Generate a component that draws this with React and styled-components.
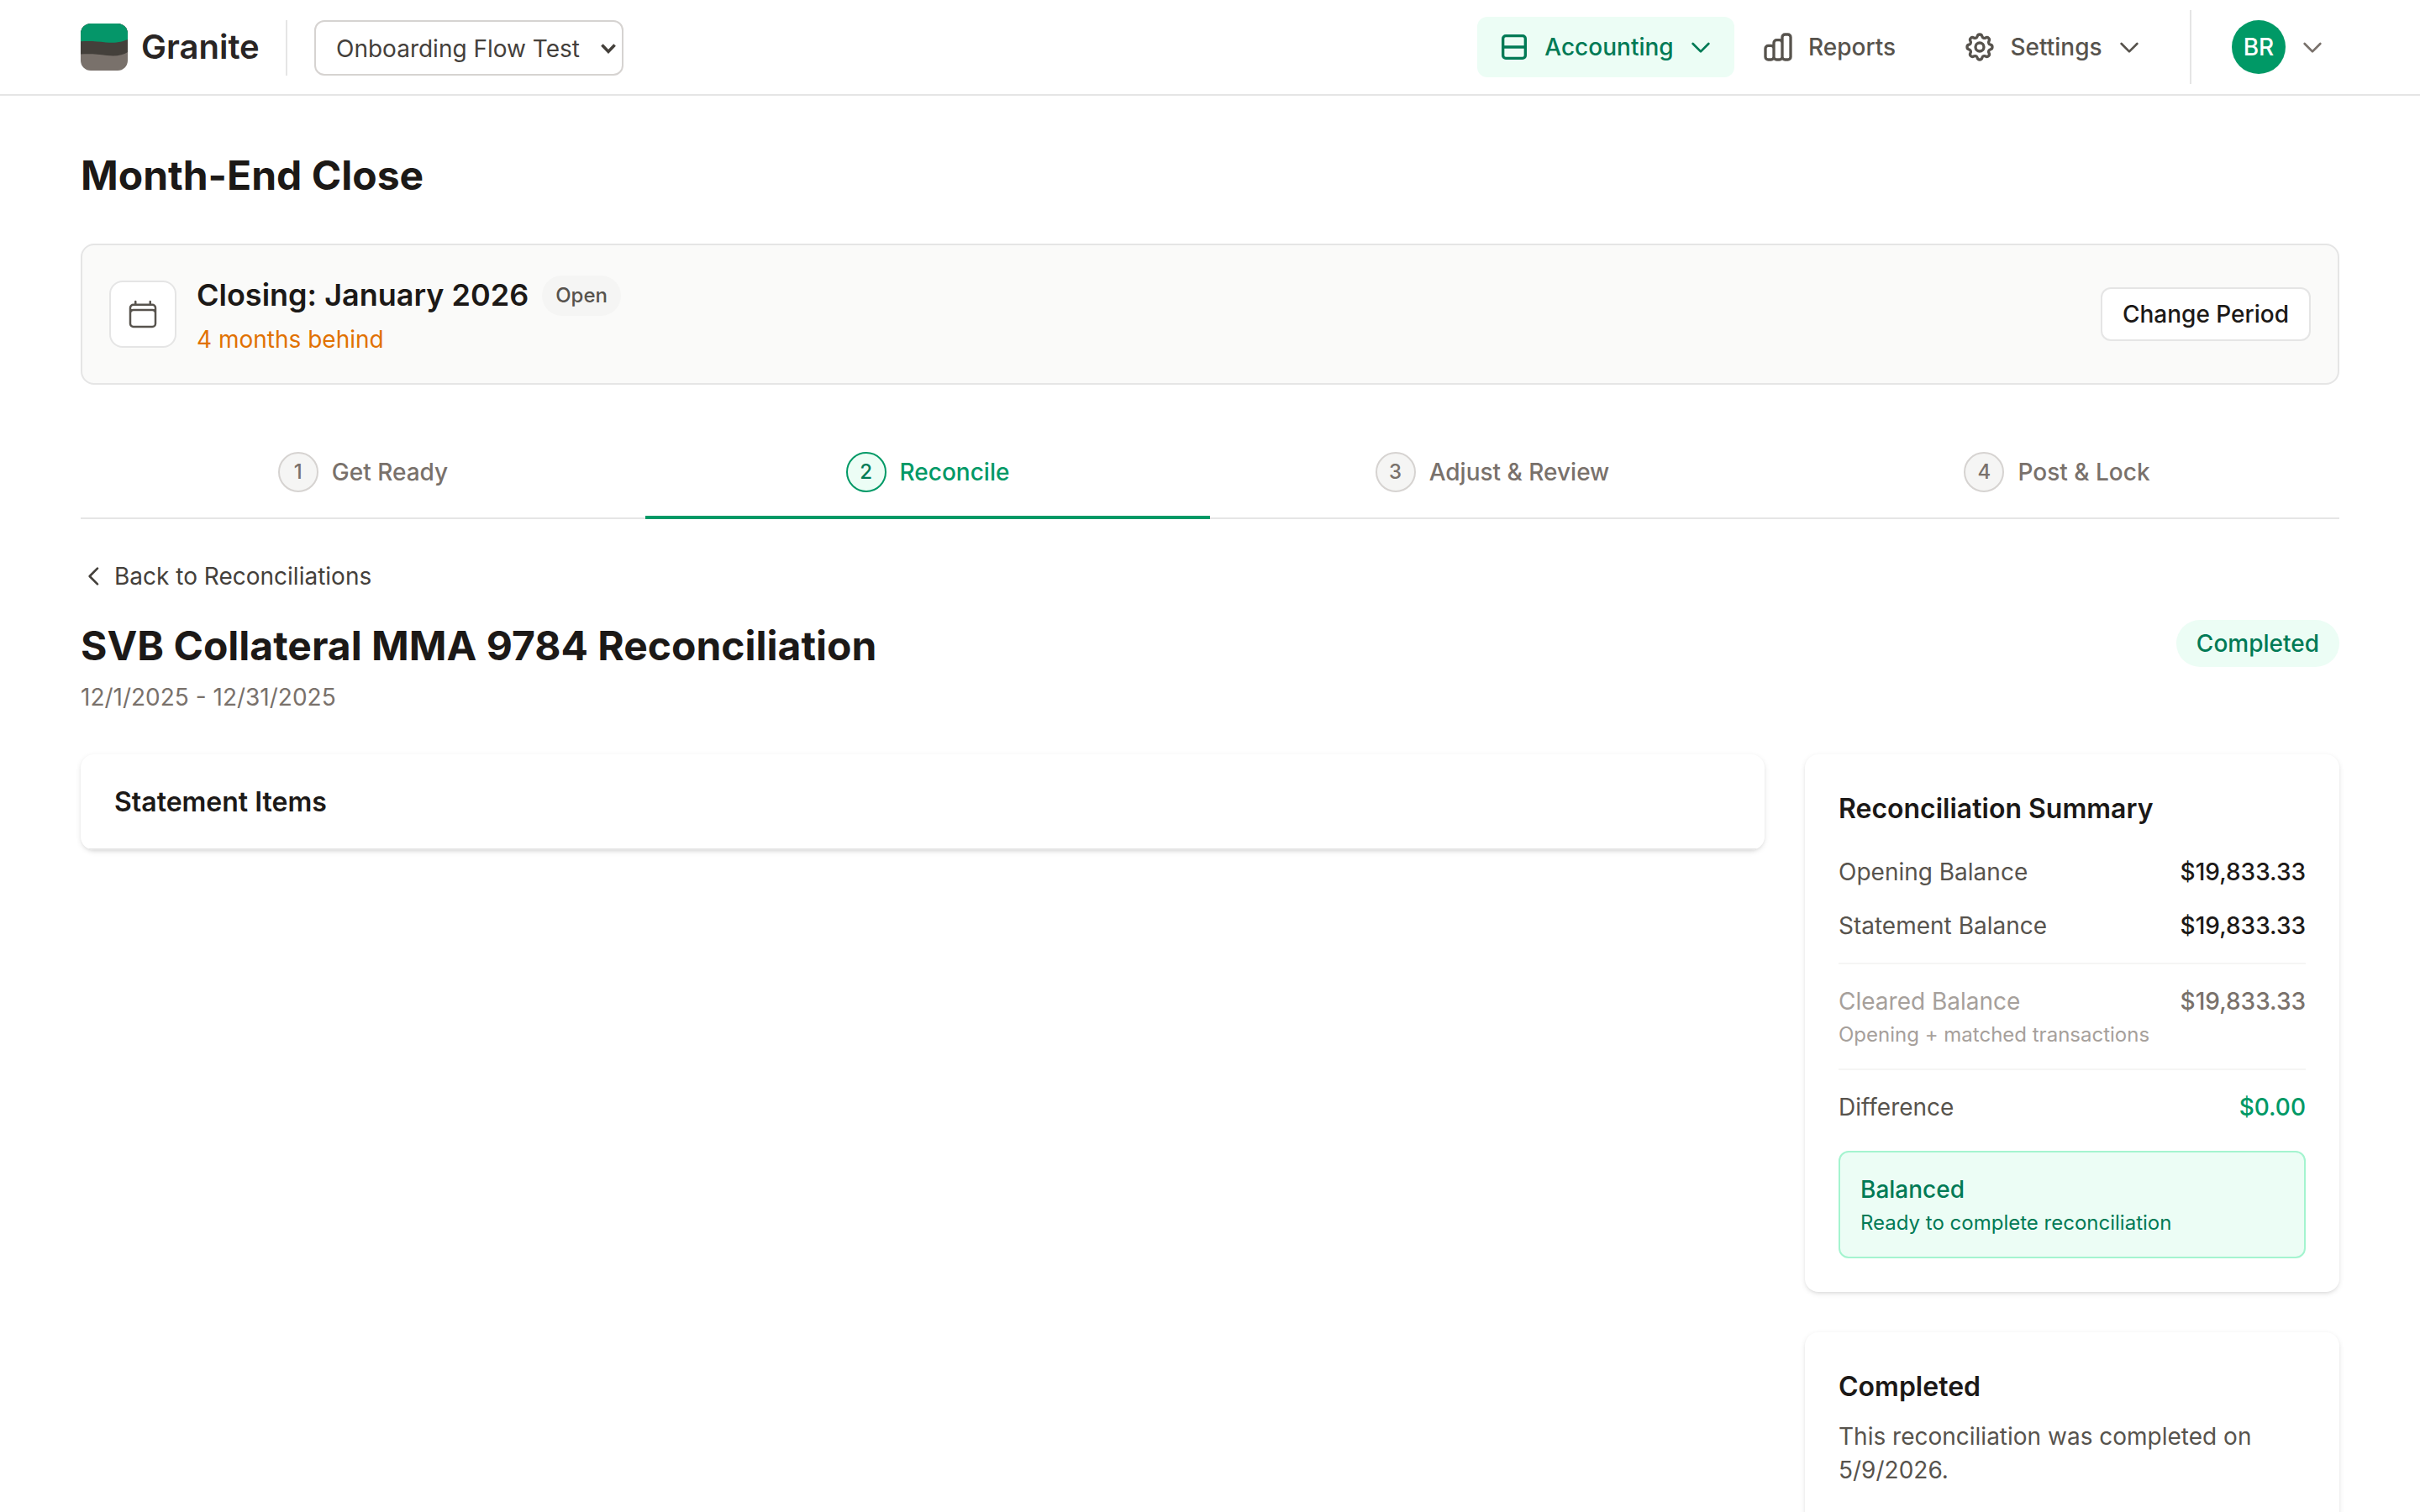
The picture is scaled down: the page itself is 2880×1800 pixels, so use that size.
import React from "react";
import styled, { createGlobalStyle, css } from "styled-components";

const c = {
  emerald50: "#ecfdf5",
  emerald200: "#a4f4cf",
  emerald600: "#009966",
  emerald700: "#007a55",
  amber600: "#e17100",
  line: "#e5e5e5",
  stone50: "#fafaf9",
  stone100: "#f5f5f4",
  stone300: "#d6d3d1",
  stone400: "#a6a09b",
  stone500: "#79716b",
  stone600: "#57534d",
  stone700: "#44403b",
  stone800: "#292524",
  stone900: "#1c1917",
};

const GlobalStyle = createGlobalStyle`
  *, *::before, *::after { box-sizing: border-box; }
  html, body { margin: 0; background: #fff; }
  body {
    font-family: Inter, "Liberation Sans", sans-serif;
    font-size: 28px;
    line-height: 40px;
    color: ${c.stone900};
    -webkit-font-smoothing: antialiased;
  }
  h1, h2, h3, p { margin: 0; }
  button { font: inherit; cursor: pointer; }
`;

const Page = styled.div`
  width: 100%;
  height: 1800px;
  overflow: hidden;
  background: #fff;
`;

/* ---------- header ---------- */

const Header = styled.header`
  display: flex;
  justify-content: space-between;
  height: 114px;
  padding: 0 96px;
  border-bottom: 2px solid ${c.line};
`;

const HeaderGroup = styled.div`
  display: flex;
  align-items: center;
`;

const BrandName = styled.span`
  width: 140px;
  margin-left: 16px;
  font-size: 40px;
  line-height: 56px;
  font-weight: 600;
  color: ${c.stone800};
`;

const Divider = styled.div`
  width: 2px;
  height: ${(p) => p.$height}px;
  margin: ${(p) => p.$margin};
  background: ${c.line};
`;

const OrgSelect = styled.button`
  display: flex;
  align-items: center;
  justify-content: space-between;
  width: 368px;
  height: 66px;
  margin-top: 2px;
  padding: 2px 6px 0 24px;
  border: 2px solid ${c.stone300};
  border-radius: 12px;
  background: #fff;
  color: ${c.stone700};
`;

const NavItem = styled.button`
  display: flex;
  align-items: center;
  justify-content: ${(p) => (p.$menu ? "space-between" : "flex-start")};
  gap: ${(p) => (p.$menu ? 0 : 16)}px;
  width: ${(p) => p.$width}px;
  height: 72px;
  padding: 0 24px;
  margin-right: ${(p) => p.$after || 0}px;
  border: 0;
  border-radius: 12px;
  font-weight: 500;
  white-space: nowrap;
  background: ${(p) => (p.$active ? c.emerald50 : "transparent")};
  color: ${(p) => (p.$active ? c.emerald700 : c.stone600)};
`;

const UserButton = styled.button`
  display: flex;
  align-items: center;
  gap: 16px;
  padding: 0 16px;
  border: 0;
  background: transparent;
  color: ${c.stone500};
`;

const Avatar = styled.span`
  display: grid;
  place-items: center;
  width: 64px;
  height: 64px;
  border-radius: 50%;
  background: ${c.emerald600};
  color: #fff;
  font-weight: 500;
`;

/* ---------- page body ---------- */

const Main = styled.main`
  padding: 62px 96px 0;
`;

const Title = styled.h1`
  font-size: 48px;
  line-height: 66px;
  font-weight: 700;
`;

const PeriodCard = styled.section`
  display: flex;
  align-items: center;
  justify-content: space-between;
  height: 168px;
  margin-top: 48px;
  padding: 32px;
  border: 2px solid ${c.line};
  border-radius: 16px;
  background: ${c.stone50};
`;

const PeriodInfo = styled.div`
  display: flex;
  align-items: center;
  gap: 24px;
`;

const IconTile = styled.div`
  display: grid;
  place-items: center;
  width: 80px;
  height: 80px;
  border: 2px solid ${c.line};
  border-radius: 16px;
  background: #fff;
  color: ${c.stone600};
`;

const PeriodHeading = styled.div`
  display: flex;
  align-items: center;
  gap: 16px;
  margin-bottom: 4px;
`;

const PeriodName = styled.h2`
  padding-bottom: 2px;
  font-size: 36px;
  line-height: 54px;
  font-weight: 600;
`;

const Badge = styled.span`
  display: inline-flex;
  align-items: center;
  border-radius: 999px;
  font-weight: 500;
  ${(p) =>
    p.$success
      ? css`
          height: 56px;
          padding: 0 24px;
          background: ${c.emerald50};
          color: ${c.emerald700};
        `
      : css`
          height: 48px;
          padding: 0 16px;
          font-size: 24px;
          line-height: 32px;
          background: ${c.stone100};
          color: ${c.stone600};
        `}
`;

const Behind = styled.p`
  color: ${c.amber600};
`;

const OutlineButton = styled.button`
  height: 64px;
  padding: 0 24px;
  border: 2px solid ${c.line};
  border-radius: 12px;
  background: #fff;
  color: ${c.stone900};
  font-weight: 500;
`;

const Steps = styled.nav`
  display: grid;
  grid-template-columns: repeat(4, 1fr);
  height: 112px;
  margin-top: 48px;
  box-shadow: inset 0 -2px 0 ${c.line};
`;

const Step = styled.div`
  display: flex;
  align-items: center;
  justify-content: center;
  gap: 16px;
  padding-top: 4px;
  border-bottom: 4px solid ${(p) => (p.$active ? c.emerald600 : "transparent")};
  font-weight: 500;
  color: ${(p) => (p.$active ? c.emerald600 : c.stone500)};
`;

const StepNumber = styled.span`
  display: grid;
  place-items: center;
  width: 48px;
  height: 48px;
  border: 2px solid ${(p) => (p.$active ? c.emerald600 : c.stone300)};
  border-radius: 50%;
  background: ${(p) => (p.$active ? c.emerald50 : c.stone100)};
  color: ${(p) => (p.$active ? c.emerald700 : c.stone500)};
  font-size: 24px;
  line-height: 32px;
`;

const BackLink = styled.a`
  display: flex;
  align-items: center;
  gap: 8px;
  width: max-content;
  margin-top: 48px;
  color: ${c.stone700};
`;

const RecordHeader = styled.div`
  display: flex;
  align-items: flex-start;
  justify-content: space-between;
  height: 114px;
  margin-top: 30px;
  ${Badge} {
    margin-top: 2px;
  }
`;

const DateRange = styled.p`
  margin-top: 8px;
  color: ${c.stone500};
`;

const Columns = styled.div`
  display: grid;
  grid-template-columns: 2004px 636px;
  gap: 48px;
  align-items: start;
  margin-top: 48px;
`;

const Sidebar = styled.aside`
  display: flex;
  flex-direction: column;
  gap: 48px;
`;

const Card = styled.section`
  overflow: hidden;
  border-radius: 16px;
  background: #fff;
  box-shadow: 0 2px 6px rgba(0, 0, 0, 0.1), 0 2px 4px -2px rgba(0, 0, 0, 0.1);
`;

const CardHeader = styled.div`
  padding: 32px 40px 30px;
  border-bottom: 2px solid ${c.line};
`;

const CardBody = styled.div`
  padding: 40px;
`;

const CardTitle = styled.h3`
  font-size: 32px;
  line-height: 50px;
  font-weight: 600;
`;

const SummaryList = styled.div`
  display: flex;
  flex-direction: column;
  gap: 24px;
  margin-top: 30px;
`;

const SummaryItem = styled.div`
  ${(p) =>
    p.$ruled &&
    css`
      padding-top: 24px;
      border-top: 2px solid ${c.stone100};
    `}
`;

const SummaryLine = styled.div`
  display: flex;
  justify-content: space-between;
  color: ${(p) => (p.$muted ? c.stone400 : c.stone600)};
`;

const Amount = styled.span`
  font-weight: 500;
  color: ${(p) =>
    ({ muted: c.stone500, success: c.emerald600 })[p.$tone] || c.stone900};
`;

const Note = styled.p`
  margin-top: 4px;
  font-size: 24px;
  line-height: 32px;
  color: ${(p) => (p.$success ? c.emerald700 : c.stone400)};
`;

const Notice = styled.div`
  margin-top: 32px;
  padding: 24px;
  border: 2px solid ${c.emerald200};
  border-radius: 12px;
  background: ${c.emerald50};
`;

const NoticeTitle = styled.p`
  font-weight: 500;
  color: ${c.emerald700};
`;

const CardText = styled.p`
  margin-top: 14px;
  height: 120px;
  color: ${c.stone600};
`;

/* ---------- icons ---------- */

const Icon = styled.svg`
  display: block;
  flex: none;
  width: ${(p) => p.$size}px;
  height: ${(p) => p.$size}px;
  fill: none;
  stroke: currentColor;
  stroke-width: ${(p) => p.$stroke || 2};
  stroke-linecap: round;
  stroke-linejoin: round;
`;

const Logo = () => (
  <svg width="56" height="56" viewBox="0 0 56 56">
    <defs>
      <clipPath id="logo-shape">
        <rect width="56" height="56" rx="12" />
      </clipPath>
    </defs>
    <g clipPath="url(#logo-shape)">
      <rect width="56" height="56" fill="#79716b" />
      <path d="M0 0H56V34C50 38 42 39.3 31 38C20 36.4 12 35.8 0 36.4Z" fill="#44403b" />
      <path d="M0 0H56V19C49 21.8 43 23.4 30 22.4C19 21.2 12 20.6 0 21.2Z" fill="#059669" />
    </g>
  </svg>
);

const ChevronDown = () => (
  <Icon $size={32} viewBox="0 0 24 24">
    <path d="M19 9l-7 7-7-7" />
  </Icon>
);

const ChevronLeft = () => (
  <Icon $size={32} viewBox="0 0 24 24">
    <path d="M15 19l-7-7 7-7" />
  </Icon>
);

const SelectArrow = () => (
  <svg width="20" height="14" viewBox="0 0 20 14" fill="none">
    <path d="M2.4 2.6 10 10.4l7.6-7.8" stroke="#44403b" strokeWidth="3.6" />
  </svg>
);

const LedgerIcon = () => (
  <Icon $size={40} viewBox="0 0 24 24">
    <path d="M4 6a2 2 0 012-2h12a2 2 0 012 2v12a2 2 0 01-2 2H6a2 2 0 01-2-2V6zM4 12h16" />
  </Icon>
);

const BarsIcon = () => (
  <Icon $size={40} viewBox="0 0 24 24">
    <path d="M9 19v-6a2 2 0 00-2-2H5a2 2 0 00-2 2v6a2 2 0 002 2h2a2 2 0 002-2zm0 0V9a2 2 0 012-2h2a2 2 0 012 2v10m-6 0a2 2 0 002 2h2a2 2 0 002-2m0 0V5a2 2 0 012-2h2a2 2 0 012 2v14a2 2 0 01-2 2h-2a2 2 0 01-2-2z" />
  </Icon>
);

const GearIcon = () => (
  <Icon $size={40} viewBox="0 0 24 24">
    <path d="M10.325 4.317c.426-1.756 2.924-1.756 3.35 0a1.724 1.724 0 002.573 1.066c1.543-.94 3.31.826 2.37 2.37a1.724 1.724 0 001.065 2.572c1.756.426 1.756 2.924 0 3.35a1.724 1.724 0 00-1.066 2.573c.94 1.543-.826 3.31-2.37 2.37a1.724 1.724 0 00-2.572 1.065c-.426 1.756-2.924 1.756-3.35 0a1.724 1.724 0 00-2.573-1.066c-1.543.94-3.31-.826-2.37-2.37a1.724 1.724 0 00-1.065-2.572c-1.756-.426-1.756-2.924 0-3.35a1.724 1.724 0 001.066-2.573c-.94-1.543.826-3.31 2.37-2.37.996.608 2.296.07 2.572-1.065z" />
    <path d="M15 12a3 3 0 11-6 0 3 3 0 016 0z" />
  </Icon>
);

const CalendarIcon = () => (
  <Icon $size={40} $stroke={1.5} viewBox="0 0 24 24">
    <path d="M6.75 3v2.25M17.25 3v2.25M3 18.75V7.5a2.25 2.25 0 0 1 2.25-2.25h13.5A2.25 2.25 0 0 1 21 7.5v11.25m-18 0A2.25 2.25 0 0 0 5.25 21h13.5A2.25 2.25 0 0 0 21 18.75m-18 0v-7.5A2.25 2.25 0 0 1 5.25 9h13.5A2.25 2.25 0 0 1 21 11.25v7.5" />
  </Icon>
);

/* ---------- app ---------- */

const steps = ["Get Ready", "Reconcile", "Adjust & Review", "Post & Lock"];

export default function App() {
  return (
    <>
      <GlobalStyle />
      <Page>
        <Header>
          <HeaderGroup>
            <Logo />
            <BrandName>Granite</BrandName>
            <Divider $height={66} $margin="2px 32px 0" />
            <OrgSelect>
              Onboarding Flow Test
              <SelectArrow />
            </OrgSelect>
          </HeaderGroup>
          <HeaderGroup>
            <NavItem $active $menu $width={306} $after={8}>
              <LedgerIcon />
              Accounting
              <ChevronDown />
            </NavItem>
            <NavItem $width={208} $after={32}>
              <BarsIcon />
              Reports
            </NavItem>
            <NavItem $menu $width={262}>
              <GearIcon />
              Settings
              <ChevronDown />
            </NavItem>
            <Divider $height={88} $margin="0 32px" />
            <UserButton>
              <Avatar>BR</Avatar>
              <ChevronDown />
            </UserButton>
          </HeaderGroup>
        </Header>

        <Main>
          <Title>Month-End Close</Title>

          <PeriodCard>
            <PeriodInfo>
              <IconTile>
                <CalendarIcon />
              </IconTile>
              <div>
                <PeriodHeading>
                  <PeriodName>Closing: January 2026</PeriodName>
                  <Badge>Open</Badge>
                </PeriodHeading>
                <Behind>4 months behind</Behind>
              </div>
            </PeriodInfo>
            <OutlineButton>Change Period</OutlineButton>
          </PeriodCard>

          <Steps>
            {steps.map((label, i) => (
              <Step key={label} $active={i === 1}>
                <StepNumber $active={i === 1}>{i + 1}</StepNumber>
                {label}
              </Step>
            ))}
          </Steps>

          <BackLink>
            <ChevronLeft />
            Back to Reconciliations
          </BackLink>

          <RecordHeader>
            <div>
              <Title as="h2">SVB Collateral MMA 9784 Reconciliation</Title>
              <DateRange>12/1/2025 - 12/31/2025</DateRange>
            </div>
            <Badge $success>Completed</Badge>
          </RecordHeader>

          <Columns>
            <Card>
              <CardHeader>
                <CardTitle>Statement Items</CardTitle>
              </CardHeader>
            </Card>

            <Sidebar>
              <Card>
                <CardBody>
                  <CardTitle>Reconciliation Summary</CardTitle>
                  <SummaryList>
                    <SummaryItem>
                      <SummaryLine>
                        Opening Balance
                        <Amount>$19,833.33</Amount>
                      </SummaryLine>
                    </SummaryItem>
                    <SummaryItem>
                      <SummaryLine>
                        Statement Balance
                        <Amount>$19,833.33</Amount>
                      </SummaryLine>
                    </SummaryItem>
                    <SummaryItem $ruled>
                      <SummaryLine $muted>
                        Cleared Balance
                        <Amount $tone="muted">$19,833.33</Amount>
                      </SummaryLine>
                      <Note>Opening + matched transactions</Note>
                    </SummaryItem>
                    <SummaryItem $ruled>
                      <SummaryLine>
                        Difference
                        <Amount $tone="success">$0.00</Amount>
                      </SummaryLine>
                    </SummaryItem>
                  </SummaryList>
                  <Notice>
                    <NoticeTitle>Balanced</NoticeTitle>
                    <Note $success>Ready to complete reconciliation</Note>
                  </Notice>
                </CardBody>
              </Card>

              <Card>
                <CardBody>
                  <CardTitle>Completed</CardTitle>
                  <CardText>This reconciliation was completed on 5/9/2026.</CardText>
                </CardBody>
              </Card>
            </Sidebar>
          </Columns>
        </Main>
      </Page>
    </>
  );
}
